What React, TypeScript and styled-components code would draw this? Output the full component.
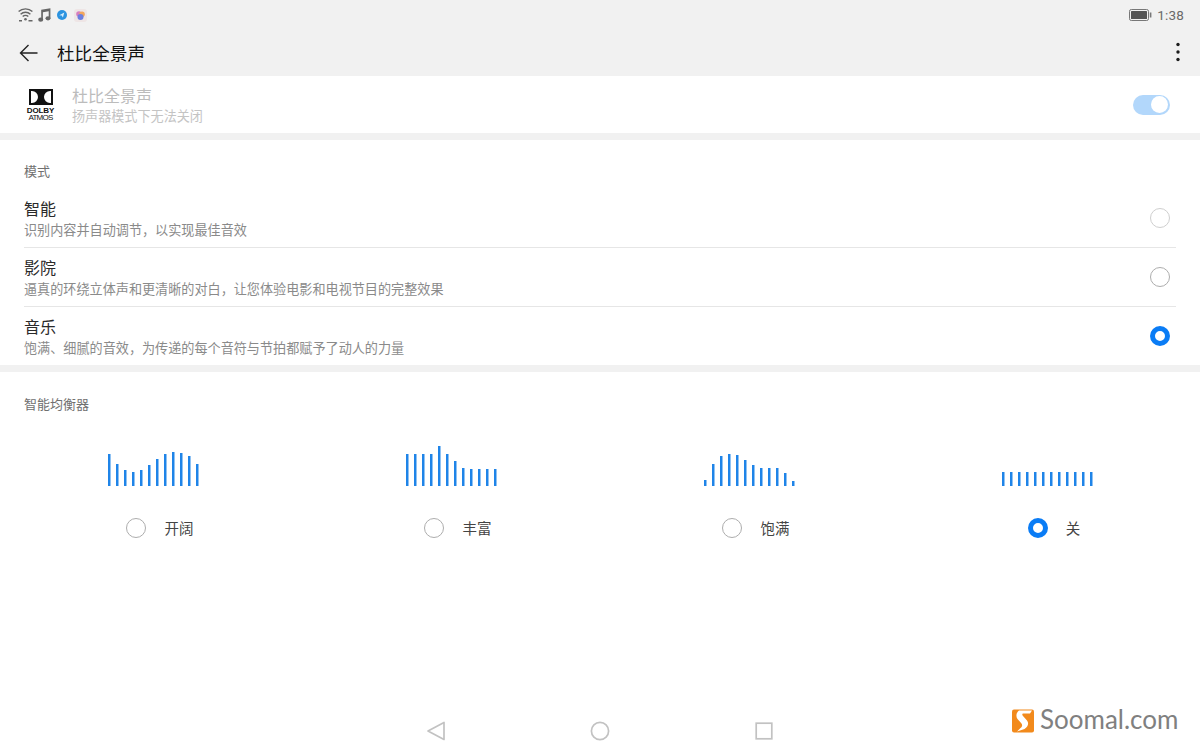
import React from "react";
import styled, { createGlobalStyle } from "styled-components";

const Global = createGlobalStyle`
  html, body { margin: 0; padding: 0; background: #fff; }
  body { font-family: "Noto Sans CJK SC", "Noto Sans", sans-serif; }
  * { box-sizing: border-box; }
`;
const Page = styled.div`
  position: relative; width: 1200px; height: 750px; overflow: hidden;
  display: flex; flex-direction: column; background: #fff;
`;
const Header = styled.header`background: #f1f1f1; height: 76px; flex: none;`;
const StatusBar = styled.div`
  height: 30px; display: flex; align-items: center; padding: 0 16px 0 18px; gap: 5px;
`;
const StatusRight = styled.div`margin-left: auto; display: flex; align-items: center; gap: 5px;`;
const Clock = styled.span`font: 13.5px Roboto, sans-serif; color: #6a6a6a; letter-spacing: 0.2px;`;
const Toolbar = styled.div`
  height: 46px; display: flex; align-items: center; padding: 0 19px 0 19px;
`;
const Title = styled.h1`
  margin: 0 0 0 19px; font-size: 17.6px; font-weight: 400; color: #111; line-height: 1;
`;
const More = styled.svg`margin: 0 0 3px auto; display: block;`;
const DolbyRow = styled.div`
  height: 57px; display: flex; align-items: center; padding: 0 30px 0 28px; flex: none;
`;
const DolbyLogo = styled.div`width: 25px; display: flex; flex-direction: column; align-items: center; color: #111; padding-top: 1px;`;
const DolbyMark = styled.svg`display: block; margin-bottom: 2px;`;
const DolbyWord = styled.span`
  font: 700 8px/7px "Liberation Sans", sans-serif; letter-spacing: -0.1px; white-space: nowrap;
`;
const DolbyAtmos = styled(DolbyWord)`font-weight: 400; letter-spacing: -0.75px;`;
const DolbyText = styled.div`margin-left: 19px; display: flex; flex-direction: column; gap: 1px;`;
const FadedTitle = styled.div`font-size: 16px; line-height: 21px; color: #bcbcbc;`;
const FadedSub = styled.div`font-size: 13.1px; line-height: 18px; color: #c4c4c4;`;
const Toggle = styled.div`
  margin-left: auto; width: 37px; height: 20px; border-radius: 10px; background: #b2d7fb;
  display: flex; justify-content: flex-end; align-items: center; padding-right: 2px;
`;
const Knob = styled.div`width: 17px; height: 17px; border-radius: 50%; background: #fff;`;
const Divider = styled.div`height: 7px; background: #f1f1f1; flex: none;`;
const Section = styled.section`padding: 0 24px; flex: none;`;
const SectionLabel = styled.div`
  height: 49px; padding-top: 21px; font-size: 13px; line-height: 20px; color: #707070;
`;
const Row = styled.div<{ $last?: boolean }>`
  height: ${p => (p.$last ? 58 : 59)}px; display: flex; align-items: center; padding-right: 6px;
  border-bottom: ${p => (p.$last ? "none" : "1px solid #e6e6e6")};
`;
const RowText = styled.div`display: flex; flex-direction: column; gap: 2px; padding-bottom: 1px;`;
const RowTitle = styled.div`font-size: 16px; line-height: 21px; color: #2a2a2a;`;
const RowSub = styled.div`font-size: 13.125px; line-height: 17px; color: #8a8a8a;`;
const Radio = styled.div<{ $on?: boolean; $light?: boolean }>`
  width: 20px; height: 20px; border-radius: 50%; flex: none; background: #fff;
  border: ${p => (p.$on ? "5px solid #0a7cf5" : `1px solid ${p.$light ? "#cfcfcf" : "#adadad"}`)};
`;
const RowRadio = styled(Radio)`margin-left: auto;`;
const EqSectionLabel = styled(SectionLabel)`height: 54px; padding-top: 22px;`;
const EqGrid = styled.div`
  display: grid; grid-template-columns: repeat(4, 298px); margin: 0 -20px;
`;
const EqItem = styled.div`display: flex; flex-direction: column; align-items: center;`;
const Bars = styled.div`
  height: 60px; display: flex; align-items: flex-end; gap: 5px; width: 91px;
  padding-left: 1px; margin-left: -1px;
`;
const Bar = styled.span<{ $h: number }>`
  width: 3px; height: ${p => p.$h}px; background: #1f84e8; flex: none;
  border-right: 1px solid #8fc2f3;
`;
const Choice = styled.div<{ $single?: boolean }>`
  margin-top: 32px; display: flex; align-items: center; height: 20px;
  gap: ${p => (p.$single ? 18 : 19)}px; padding-left: ${p => (p.$single ? 14 : 13)}px;
`;
const ChoiceLabel = styled.span`font-size: 14.5px; line-height: 20px; color: #444;`;
const NavBar = styled.nav`
  margin-top: auto; height: 40px; display: flex; justify-content: center; align-items: center;
  gap: 144px; padding-top: 1px; flex: none;
`;
const Watermark = styled.div`
  position: absolute; left: 1012px; top: 706px; display: flex; align-items: center; gap: 5px;
`;
const WatermarkText = styled.span`
  font: 26px/26px Lato, sans-serif; color: #808080; margin-bottom: 3px;
`;

const eq = [
  { name: "开阔", bars: [32, 22, 16, 14, 16, 21, 27, 32, 34, 33, 30, 22] },
  { name: "丰富", bars: [32, 32, 32, 32, 40, 32, 25, 18, 17, 17, 17, 17] },
  { name: "饱满", bars: [6, 22, 30, 32, 31, 26, 21, 18, 18, 18, 13, 5] },
  { name: "关", bars: [14, 14, 14, 14, 14, 14, 14, 14, 14, 14, 14, 14], on: true },
];
const modes = [
  { t: "智能", s: "识别内容并自动调节，以实现最佳音效", light: true },
  { t: "影院", s: "逼真的环绕立体声和更清晰的对白，让您体验电影和电视节目的完整效果" },
  { t: "音乐", s: "饱满、细腻的音效，为传递的每个音符与节拍都赋予了动人的力量", on: true },
];

export default function App() {
  return (
    <Page>
      <Global />
      <Header>
        <StatusBar>
          <svg width="15" height="14" viewBox="0 0 15 14" fill="none" stroke="#666" strokeWidth="1.4">
            <path d="M0.6 3.6a10 10 0 0 1 13.800 0M2.600 6.200a7 7 0 0 1 9.800 0M4.700 8.600a4 4 0 0 1 5.600 0" />
            <circle cx="7.500" cy="11.200" r="1.300" fill="#666" stroke="none" />
            <path d="M10.500 12.800h4M1 12.800h3" strokeWidth="1.500" />
          </svg>
          <svg width="13" height="14" viewBox="0 0 13 14">
            <path d="M3.200 1.800 12.400.3v10h-1.700V3.200L4.900 4.200v8h-1.700z" fill="#666" />
            <ellipse cx="2.700" cy="11.700" rx="2.500" ry="2.100" fill="#666" />
            <ellipse cx="10" cy="10.300" rx="2.500" ry="2.100" fill="#666" />
          </svg>
          <svg width="13" height="12" viewBox="0 0 13 12">
            <circle cx="6" cy="6" r="5" fill="#2b93e0" />
            <path d="M3.300 6.200 8.300 3.600 6.900 8.600 5.700 6.600z" fill="#d5edfb" />
          </svg>
          <svg width="13" height="13" viewBox="0 0 13 13">
            <rect x="0" y="0" width="13" height="13" rx="3" fill="#eee5e5" />
            <circle cx="5" cy="5" r="2.800" fill="#d77ec0" />
            <circle cx="8" cy="5.200" r="2.800" fill="#f2a65c" />
            <circle cx="6.500" cy="8" r="3" fill="#6d7fe0" />
          </svg>
          <StatusRight>
            <svg width="23" height="12" viewBox="0 0 23 12">
              <rect x="0.500" y="0.500" width="19" height="11" rx="1.800" fill="none" stroke="#777" />
              <rect x="2" y="2" width="16" height="8" rx="0.600" fill="#555" />
              <rect x="20.800" y="3.500" width="1.600" height="5" fill="#777" />
            </svg>
            <Clock>1:38</Clock>
          </StatusRight>
        </StatusBar>
        <Toolbar>
          <svg width="19" height="18" viewBox="0 0 19 18" fill="none" stroke="#222" strokeWidth="1.4">
            <path d="M18.500 9H1.500M9.500 1 1.500 9l8 8" />
          </svg>
          <Title>杜比全景声</Title>
          <More width="6" height="20" viewBox="0 0 6 20" fill="#1c1c1c">
            <circle cx="3" cy="2.500" r="1.700" />
            <circle cx="3" cy="10" r="1.700" />
            <circle cx="3" cy="17.500" r="1.700" />
          </More>
        </Toolbar>
      </Header>
      <DolbyRow>
        <DolbyLogo>
          <DolbyMark width="24" height="16" viewBox="0 0 24 16">
            <rect width="24" height="16" fill="#111" />
            <path d="M2 2h1A6 6 0 0 1 9 8a6 6 0 0 1-6 6H2zM22 2h-1a6 6 0 0 0-6 6 6 6 0 0 0 6 6h1z" fill="#fff" />
          </DolbyMark>
          <DolbyWord>DOLBY</DolbyWord>
          <DolbyAtmos>ATMOS</DolbyAtmos>
        </DolbyLogo>
        <DolbyText>
          <FadedTitle>杜比全景声</FadedTitle>
          <FadedSub>扬声器模式下无法关闭</FadedSub>
        </DolbyText>
        <Toggle><Knob /></Toggle>
      </DolbyRow>
      <Divider />
      <Section>
        <SectionLabel>模式</SectionLabel>
        {modes.map((m, i) => (
          <Row key={m.t} $last={i === modes.length - 1}>
            <RowText>
              <RowTitle>{m.t}</RowTitle>
              <RowSub>{m.s}</RowSub>
            </RowText>
            <RowRadio $on={m.on} $light={m.light} />
          </Row>
        ))}
      </Section>
      <Divider />
      <Section>
        <EqSectionLabel>智能均衡器</EqSectionLabel>
        <EqGrid>
          {eq.map(e => (
            <EqItem key={e.name}>
              <Bars>{e.bars.map((h, i) => <Bar key={i} $h={h} />)}</Bars>
              <Choice $single={e.on}>
                <Radio $on={e.on} />
                <ChoiceLabel>{e.name}</ChoiceLabel>
              </Choice>
            </EqItem>
          ))}
        </EqGrid>
      </Section>
      <NavBar>
        <svg width="20" height="20" viewBox="0 0 20 20" fill="none" stroke="#c2c2c2" strokeWidth="1.7" strokeLinejoin="round">
          <path d="M18 1.500V18.500L2 10z" />
        </svg>
        <svg width="20" height="20" viewBox="0 0 20 20" fill="none" stroke="#c2c2c2" strokeWidth="1.7">
          <circle cx="10" cy="10" r="8.600" />
        </svg>
        <svg width="20" height="20" viewBox="0 0 20 20" fill="none" stroke="#c2c2c2" strokeWidth="1.7">
          <rect x="2.200" y="2.200" width="15.600" height="15.600" />
        </svg>
      </NavBar>
      <Watermark>
        <svg width="23" height="24" viewBox="0 0 23 24">
          <rect width="22" height="23" rx="2" y="0.500" fill="#f28a1c" />
          <path d="M7 1.500h13l-2 3h-6.500c-1.500 0-1.500 1.300-.5 2.500l4 4.500c2.200 2.600 1 6.500-2.500 8.500L5 22.500l3.500-3.500c2-1.500 2-3.500.8-4.800L5.500 10C3.500 7.500 4.500 3 7 1.500z" fill="#fff" />
        </svg>
        <WatermarkText>Soomal.com</WatermarkText>
      </Watermark>
    </Page>
  );
}
